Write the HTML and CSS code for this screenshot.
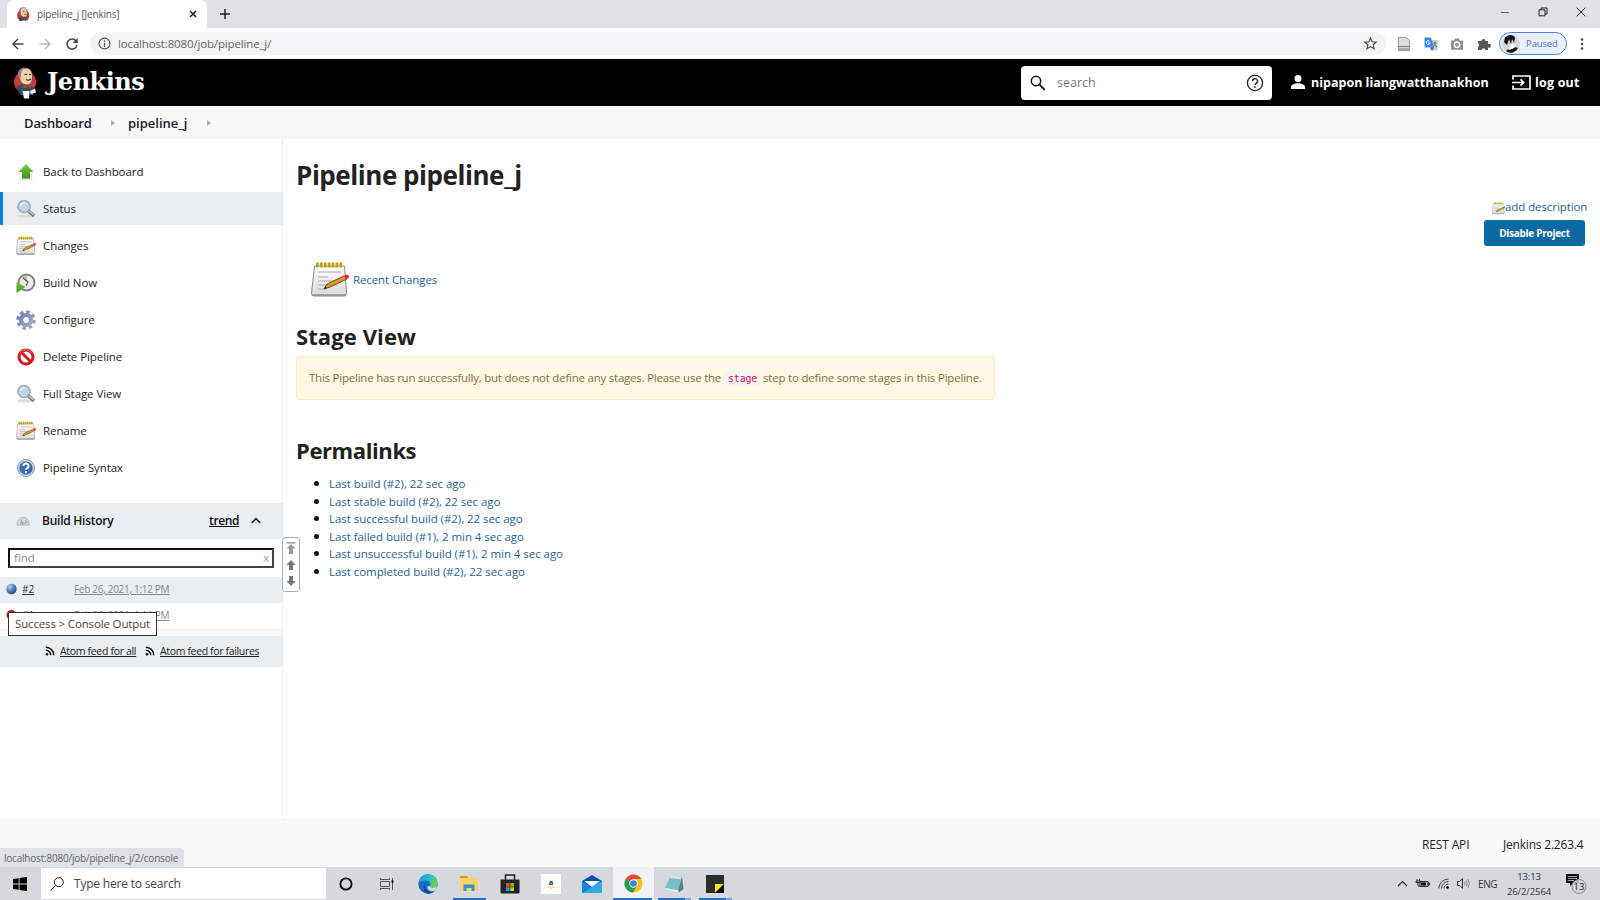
FILE: index.html
```html
<!DOCTYPE html>
<html lang="en">
<head>
<meta charset="utf-8">
<title>pipeline_j [Jenkins]</title>
<link rel="stylesheet" href="styles.css">
</head>
<body>
<svg class="defs" width="0" height="0">
  <defs>
    <linearGradient id="paper" x1="0" y1="0" x2="0" y2="1"><stop offset="0" stop-color="#fff"/><stop offset="1" stop-color="#d9d9d7"/></linearGradient>
    <linearGradient id="green" x1="0" y1="0" x2="0" y2="1"><stop offset="0" stop-color="#7ac943"/><stop offset="1" stop-color="#3a9a14"/></linearGradient>
    <radialGradient id="ballBlue" cx=".35" cy=".3" r=".8"><stop offset="0" stop-color="#b9d3ee"/><stop offset=".5" stop-color="#4a7fc0"/><stop offset="1" stop-color="#1d4277"/></radialGradient>
    <linearGradient id="edge" x1="0" y1="0" x2="1" y2=".3"><stop offset="0" stop-color="#1b8fe0"/><stop offset=".5" stop-color="#25b5d8"/><stop offset="1" stop-color="#62d552"/></linearGradient>
    <linearGradient id="gearFill" x1="0" y1="0" x2="1" y2="1"><stop offset="0" stop-color="#6f83b5"/><stop offset="1" stop-color="#a7a7c9"/></linearGradient>
  </defs>
  <symbol id="butler" viewBox="0 0 24 32">
    <circle cx="12" cy="15" r="11" fill="#d33833"/>
    <path d="M3.500 20c2-2 5-3 8.500-3s8 2 9.500 5l-1 6H7z" fill="#335061"/>
    <path d="M6 8c0-4 3-7 7-7 4.500 0 6.500 4 6.500 9 0 5-2 8-5.500 8-5 0-8-4-8-10z" fill="#ecd0ae" stroke="#4a3b36" stroke-width=".8"/>
    <path d="M5 7c0-4 3-6.500 7-6.500-3 2-4 4-4 7.500l-.5 5-2-2z" fill="#8d8780"/>
    <path d="M11.500 7.500h2.500M16 7.500h2M13 12.500c2 1.500 3 1 5-.5" stroke="#2b2220" stroke-width="1.100" fill="none"/>
    <path d="M10.500 17l4 2 4-2v4l-4-1.200-4 1.200z" fill="#d33833"/>
    <path d="M9.500 24h7l-.5 7.500h-5z" fill="#fff"/>
    <path d="M17 24l5-2.500 1 4-5 1.500z" fill="#eee"/>
  </symbol>
  <symbol id="note" viewBox="0 0 38 38">
    <path d="M3.500 5h30l2 27q0 3-2 3h-31q-2 0-2-3z" fill="url(#paper)" stroke="#8c8c88"/>
    <path d="M2 34h33" stroke="#8e8e8a" stroke-width="1.500"/>
    <path d="M7 11h23M7 16h10M7 20h19M7 24h19M7 28h9" stroke="#a9a9a7" stroke-width="1.100"/>
    <path d="M5 4h27" stroke="#bfa20a" stroke-width="5" stroke-dasharray="2.800 1.100"/>
    <path d="M13 28l3-5 17-8 3 3-17 8z" fill="#d9962e" stroke="#6b4414" stroke-width=".9"/>
    <path d="M33 15l3-1.500q3 1 1 4l-2 1z" fill="#e0202a"/>
    <path d="M13 28l1.500-2.500 1.500 1.500z" fill="#222"/>
  </symbol>
  <symbol id="lens" viewBox="0 0 20 20">
    <ellipse cx="9" cy="17" rx="8" ry="1.600" fill="#ddd"/>
    <path d="M12 11.500l6 5.500" stroke="#777b80" stroke-width="3.400"/>
    <path d="M13 12l4.500 4" stroke="#c9ccd0" stroke-width="1.200"/>
    <circle cx="8" cy="7.500" r="6" fill="#bdd7f2" stroke="#a4a9ae" stroke-width="1.700"/>
    <path d="M4.500 7c.5-2 2-3 4-3" stroke="#eef6fd" stroke-width="1.500" fill="none"/>
  </symbol>
  <symbol id="rss" viewBox="0 0 10 10">
    <circle cx="2" cy="8.200" r="1.300"/><path d="M.8 4.200a5 5 0 0 1 5 5M.8 1.200a8 8 0 0 1 8 8" fill="none" stroke="#000" stroke-width="1.400"/>
  </symbol>
</svg>

<header class="tabstrip">
  <div class="tab">
    <svg class="favicon" width="13" height="14" viewBox="3 0 19 25"><use href="#butler" width="24" height="32"/></svg>
    <span class="t tab-title">pipeline_j [Jenkins]</span>
    <svg class="tab-close" width="8" height="8" viewBox="0 0 8 8"><path d="M1 1l6 6M7 1L1 7" stroke="#222" stroke-width="1.500"/></svg>
  </div>
  <svg class="newtab" width="12" height="12" viewBox="0 0 12 12"><path d="M6 1v10M1 6h10" stroke="#222" stroke-width="1.500"/></svg>
  <div class="winctl">
    <svg width="10" height="10" viewBox="0 0 10 10"><path d="M1 5.500h8" stroke="#555" stroke-width=".9"/></svg>
    <svg width="10" height="10" viewBox="0 0 10 10"><path d="M1 2.800h6v6H1zM3 2.800V1h6v6H7" fill="none" stroke="#222"/></svg>
    <svg width="10" height="10" viewBox="0 0 10 10"><path d="M.7.700l8.600 8.600M9.300.700L.7 9.300" stroke="#222" stroke-width=".9"/></svg>
  </div>
</header>

<div class="toolbar">
  <div class="navbtns">
    <svg width="12" height="12" viewBox="0 0 12 12"><path d="M11.500 6H1M6 1L1 6l5 5" fill="none" stroke="#444" stroke-width="1.400"/></svg>
    <svg width="12" height="12" viewBox="0 0 12 12"><path d="M.5 6H11M6 1l5 5-5 5" fill="none" stroke="#b5b7ba" stroke-width="1.400"/></svg>
    <svg width="12" height="12" viewBox="0 0 12 12"><path d="M10.200 3.200A5 5 0 1 0 11 7.200" fill="none" stroke="#444" stroke-width="1.500"/><path d="M11.700 0v5H6.700z" fill="#444"/></svg>
  </div>
  <div class="omnibox">
    <svg width="13" height="13" viewBox="0 0 13 13"><circle cx="6.500" cy="6.500" r="5.400" fill="none" stroke="#555" stroke-width="1.200"/><path d="M6.500 5.700v4M6.500 3.200v1.500" stroke="#555" stroke-width="1.300"/></svg>
    <span class="t url">localhost:8080/job/pipeline_j/</span>
    <svg class="star" width="13" height="13" viewBox="0 0 13 13"><path d="M6.500 1l1.600 3.800 4.100.3-3.100 2.700 1 4-3.600-2.200-3.600 2.200 1-4L.8 5.100l4.100-.3z" fill="none" stroke="#444" stroke-width="1.100"/></svg>
  </div>
  <div class="exts">
    <svg width="14" height="14" viewBox="0 0 14 14"><path d="M1.500.500h8l3 3v10h-11z" fill="#ddd" stroke="#999"/><path d="M2 9.500h10M2 12h10" stroke="#777"/></svg>
    <svg width="14" height="14" viewBox="0 0 14 14"><path d="M5 3h8.500v10.500H7z" fill="#c6cbd2"/><path d="M.5.500h6.500l3 10H.5z" fill="#4285f4"/><path d="M6 10.500h4l-2 3.500z" fill="#2b5fc4"/><path d="M5.500 4.300A1.900 1.900 0 1 0 6 6H4" stroke="#fff" fill="none"/><path d="M9 6h4M11 5v1c0 2-1 3-2 4M10 7l3 3" stroke="#666" fill="none" stroke-width=".9"/></svg>
    <svg width="14" height="14" viewBox="0 0 14 14"><path d="M1 3.500h3.300L5 1.500h4l.7 2H13v9.300H1z" fill="#8e8e8e"/><circle cx="7" cy="7.800" r="2.800" fill="#999" stroke="#fff" stroke-width="1.300"/></svg>
    <svg width="14" height="14" viewBox="0 0 14 14"><path d="M1 4h3.500a2 2 0 1 1 4 0H11v3a2 2 0 1 1 0 3.500V13H8.200a1.700 1.700 0 0 0-3.400 0H1v-3.200a1.700 1.700 0 0 0 0-3.300z" fill="#55585c"/></svg>
  </div>
  <div class="pill">
    <svg width="18" height="18" viewBox="0 0 18 18"><circle cx="9" cy="9" r="9" fill="#d8d5d0"/><path d="M3 2.500C6-1 12-1 13 3l-1 5-2-4-1 5-2-5-2 6-3-3z" fill="#111"/><path d="M4 16c3-3 6-1 9-4l3 1c-3 5-8 6-12 3z" fill="#191919"/><path d="M9 9l5 1-2 3-5 2z" fill="#fff"/></svg>
    <span class="t paused">Paused</span>
  </div>
  <svg class="kebab" width="4" height="14" viewBox="0 0 4 14" fill="#444"><circle cx="2" cy="2.500" r="1.300"/><circle cx="2" cy="7" r="1.300"/><circle cx="2" cy="11.500" r="1.300"/></svg>
</div>

<div class="jheader">
  <svg class="logo" width="24" height="32"><use href="#butler" width="24" height="32"/></svg>
  <span class="t brand">Jenkins</span>
  <div class="searchbox">
    <svg width="16" height="16" viewBox="0 0 16 16"><circle cx="6" cy="6" r="4.700" fill="none" stroke="#111" stroke-width="1.500"/><path d="M9.300 9.300l5.500 5.500" stroke="#111" stroke-width="1.900"/></svg>
    <span class="t placeholder">search</span>
    <svg class="help" width="18" height="18" viewBox="0 0 18 18"><circle cx="9" cy="9" r="7.600" fill="none" stroke="#1c2733" stroke-width="1.400"/><path d="M6.500 7.200a2.500 2.500 0 1 1 3.600 2.200c-.8.400-1.100.8-1.100 1.600M9 12.300v1.600" fill="none" stroke="#1c2733" stroke-width="1.400"/></svg>
  </div>
  <div class="user"><svg width="14" height="14" viewBox="0 0 14 14" fill="#fff"><circle cx="7" cy="3.500" r="3.500"/><path d="M0 14v-2c0-2.500 4-3.700 7-3.700s7 1.200 7 3.700v2z"/></svg><span class="t username">nipapon liangwatthanakhon</span></div>
  <div class="logout"><svg width="19" height="15" viewBox="0 0 19 15"><path d="M1 4.500V1h17v13H1v-3.500M0 7.500h11.500M8.500 4.300l3.200 3.200-3.200 3.200" fill="none" stroke="#fff" stroke-width="1.700"/></svg><span class="t logout-text">log out</span></div>
</div>

<nav class="crumbs">
  <a class="t crumb crumb-a">Dashboard</a>
  <svg width="4" height="6" viewBox="0 0 4 6"><path d="M0 0l4 3-4 3z" fill="#aaa"/></svg>
  <a class="t crumb crumb-b">pipeline_j</a>
  <svg width="4" height="6" viewBox="0 0 4 6"><path d="M0 0l4 3-4 3z" fill="#aaa"/></svg>
</nav>

<main class="page">
  <aside class="side">
    <ul class="tasks">
      <li><svg width="20" height="20" viewBox="0 0 20 20"><ellipse cx="10" cy="17" rx="7" ry="1.200" fill="#ddd"/><path d="M10 2l7.500 8H14v6.500H6V10H2.500z" fill="url(#green)"/></svg><span class="t task">Back to Dashboard</span></li>
      <li class="active"><svg width="20" height="20"><use href="#lens" width="20" height="20"/></svg><span class="t task">Status</span></li>
      <li><svg width="20" height="20"><use href="#note" width="20" height="20"/></svg><span class="t task">Changes</span></li>
      <li><svg width="20" height="20" viewBox="0 0 20 20"><circle cx="10.500" cy="9.500" r="8" fill="#eeeef2" stroke="#7b7d95" stroke-width="2"/><path d="M10.500 9.500L6 4.500l5-2z" fill="#d8bd59"/><path d="M7 5l5 4-2 4" fill="none" stroke="#555" stroke-width="1.200"/><path d="M.5 9l9 5-9 6z" fill="url(#green)"/></svg><span class="t task">Build Now</span></li>
      <li><svg width="20" height="20" viewBox="0 0 20 20"><circle cx="10" cy="10" r="8" fill="none" stroke="url(#gearFill)" stroke-width="3.600" stroke-dasharray="3.400 2.883"/><circle cx="10" cy="10" r="5" fill="none" stroke="url(#gearFill)" stroke-width="4.200"/></svg><span class="t task">Configure</span></li>
      <li><svg width="20" height="20" viewBox="0 0 20 20"><circle cx="10" cy="10" r="7" fill="#fff" stroke="#d3171c" stroke-width="3"/><path d="M5 5l10 10" stroke="#d3171c" stroke-width="3"/><path d="M3.500 6.500a7.500 7.500 0 0 1 13 0" fill="none" stroke="#ee7678"/></svg><span class="t task">Delete Pipeline</span></li>
      <li><svg width="20" height="20"><use href="#lens" width="20" height="20"/></svg><span class="t task">Full Stage View</span></li>
      <li><svg width="20" height="20"><use href="#note" width="20" height="20"/></svg><span class="t task">Rename</span></li>
      <li><svg width="20" height="20" viewBox="0 0 20 20"><circle cx="10" cy="10" r="8.300" fill="#3f6fae" stroke="#56779f" stroke-width="1"/><circle cx="10" cy="10" r="7.400" fill="none" stroke="#dbe6f3" stroke-width="1.200"/><path d="M7.500 8a2.500 2.500 0 1 1 3.600 2.200c-.8.400-1.100.8-1.100 1.600M10 13v2" fill="none" stroke="#fff" stroke-width="1.900"/></svg><span class="t task">Pipeline Syntax</span></li>
    </ul>
    <section class="history">
      <div class="hist-head">
        <svg width="14" height="10" viewBox="0 0 14 10"><path d="M1 9C1 5 3 1.500 7 1.500S13 5 13 9z" fill="#ddd" stroke="#b5b5b5"/><path d="M7 9L5 3.500M4 7h6M9 4l2 3" stroke="#999" fill="none"/></svg>
        <span class="t hist-title">Build History</span>
        <a class="t trend">trend</a>
        <svg class="chev" width="10" height="7" viewBox="0 0 10 7"><path d="M.7 6L5 1.700 9.300 6" fill="none" stroke="#222" stroke-width="1.600"/></svg>
      </div>
      <div class="find-row"><div class="find"><span class="t find-text">find</span><span class="find-x">x</span></div></div>
      <div class="build build-on">
        <svg width="11" height="12" viewBox="0 0 11 12"><circle cx="5.500" cy="6" r="5.200" fill="url(#ballBlue)"/></svg>
        <a class="t num">#2</a><a class="t date">Feb 26, 2021, 1:12 PM</a>
      </div>
      <div class="build">
        <svg width="11" height="12" viewBox="0 0 11 12"><circle cx="5.500" cy="6" r="5" fill="#c4161c"/></svg>
        <a class="t num">#1</a><a class="t date">Feb 26, 2021, 1:11 PM</a>
        <div class="tooltip"><span class="t tip">Success &gt; Console Output</span></div>
      </div>
      <div class="gap-strip"></div>
      <div class="feeds">
        <svg width="10" height="10"><use href="#rss" width="10" height="10"/></svg><a class="t feed feed-a">Atom feed for all</a>
        <svg width="10" height="10"><use href="#rss" width="10" height="10"/></svg><a class="t feed feed-b">Atom feed for failures</a>
      </div>
    </section>
    <div class="scroller">
      <svg width="12" height="12" viewBox="0 0 12 12" fill="#999"><path d="M1.500 0h9v1.400h-9zM6 2l4.500 4.500H8V12H4V6.500H1.500z"/></svg>
      <svg width="12" height="12" viewBox="0 0 12 12" fill="#777"><path d="M6 1l4.500 5H8v5H4V6H1.500z"/></svg>
      <svg width="12" height="12" viewBox="0 0 12 12" fill="#777"><path d="M6 11l4.500-5H8V1H4v5H1.500z"/></svg>
    </div>
  </aside>

  <div class="main">
    <h1>Pipeline pipeline_j</h1>
    <div class="actions">
      <div class="adddesc"><svg width="13" height="13"><use href="#note" width="13" height="13"/></svg><a class="t desc">add description</a></div>
      <button class="disable">Disable Project</button>
    </div>
    <div class="recent"><svg width="38" height="38"><use href="#note" width="38" height="38"/></svg><a class="t rc">Recent Changes</a></div>
    <h2>Stage View</h2>
    <div class="warning"><span class="t w1">This Pipeline has run successfully, but does not define any stages. Please use the</span><code>stage</code><span class="t w3">step to define some stages in this Pipeline.</span></div>
    <h2 class="perma">Permalinks</h2>
    <ul class="links">
      <li><a>Last build (#2), 22 sec ago</a></li>
      <li><a>Last stable build (#2), 22 sec ago</a></li>
      <li><a>Last successful build (#2), 22 sec ago</a></li>
      <li><a>Last failed build (#1), 2 min 4 sec ago</a></li>
      <li><a>Last unsuccessful build (#1), 2 min 4 sec ago</a></li>
      <li><a>Last completed build (#2), 22 sec ago</a></li>
    </ul>
  </div>
</main>

<footer class="foot">
  <div class="status">localhost:8080/job/pipeline_j/2/console</div>
  <span class="t rest">REST API</span><span class="t ver">Jenkins 2.263.4</span>
</footer>

<div class="taskbar">
  <div class="start"><svg width="14" height="14" viewBox="0 0 14 14"><path d="M0 2l5.700-.8v5.400H0zM6.500 1L14 0v6.600H6.500zM0 7.400h5.700v5.400L0 12zM6.500 7.400H14V14l-7.500-1z"/></svg></div>
  <div class="tsearch"><svg width="14" height="14" viewBox="0 0 14 14"><circle cx="8.800" cy="5.200" r="4.500" fill="none" stroke="#222"/><path d="M5.500 8.500L.7 13.500" stroke="#222"/></svg><span class="t type">Type here to search</span></div>
  <div class="apps">
    <div class="app"><svg width="14" height="14" viewBox="0 0 14 14"><circle cx="7" cy="7" r="5.600" fill="none" stroke="#111" stroke-width="1.900"/></svg></div>
    <div class="app"><svg width="14" height="14" viewBox="0 0 14 14"><path d="M.5 1v1.500h9V1M.5 13v-1.500h9V13M.5 4.500h9v5h-9zM12.500 1v12" fill="none" stroke="#444" stroke-width=".9"/><path d="M11.500 3.500h2v2h-2z"/></svg></div>
    <div class="app"><svg width="20" height="20" viewBox="0 0 20 20"><circle cx="10" cy="10" r="9.700" fill="#1470c2"/><path d="M.4 9.500C1 4 5 .3 10 .3c6 0 9.700 4 9.700 8.500 0 3-2.200 4.900-5 4.900-2 0-3.200-.7-2.700-1.700 1.500-2.500-.5-5.500-4-5.500S1.500 7.500.4 9.500z" fill="url(#edge)"/><path d="M7.500 9.300c-2 4 1 8.500 6 8.500 1.500 0 3-.5 4.200-1.300-1.700 2-4.700 3.200-7.700 3.200-4.200-1.500-6-7.500-2.500-10.400z" fill="#0d4b94"/><path d="M12 12c-.5 1 .7 1.700 2.700 1.700 1.700 0 3.300-.7 4.200-1.900l-.7 4c-1.200 1-2.700 1.500-4.200 1.500-3 0-5-2.300-4.500-5z" fill="#d5d9dd"/></svg></div>
    <div class="app run"><svg width="18" height="16" viewBox="0 0 18 16"><path d="M0 0h7l1.500 2H18v13H0z" fill="#fbd367"/><path d="M0 0h7l1.500 2H0z" fill="#dd9c16"/><path d="M3.500 15V8.500h11V15h-3v-3h-5v3z" fill="#3a8fd8"/></svg></div>
    <div class="app"><svg width="20" height="20" viewBox="0 0 20 20"><path d="M5.500 6V1h9v5" fill="none" stroke="#222" stroke-width="1.500"/><path d="M.5 5.500h19V19l-1 .5h-17l-1-.5z" fill="#222"/><path d="M6 9h3.700v3.700H6z" fill="#f25022"/><path d="M10.300 9H14v3.700h-3.700z" fill="#7fba00"/><path d="M6 13.300h3.700V17H6z" fill="#00a4ef"/><path d="M10.300 13.300H14V17h-3.700z" fill="#ffb900"/></svg></div>
    <div class="app"><div class="amazon">a<svg width="6" height="2" viewBox="0 0 6 2"><path d="M0 .3q3 1.800 6 0" stroke="#f90" stroke-width=".7" fill="none"/></svg></div></div>
    <div class="app"><svg width="20" height="20" viewBox="0 0 20 20"><path d="M0 7l10-6 10 6v12H0z" fill="#0a4fa3"/><path d="M2 7h16l-8 6z" fill="#fff"/><path d="M0 7l10 6.500L0 19z" fill="#1684d8"/><path d="M20 7L0 19h20z" fill="#35a8ec"/></svg></div>
    <div class="app run chrome"><svg width="19" height="19" viewBox="0 0 20 20"><circle cx="10" cy="10" r="9.500" fill="#fbc116"/><path d="M10 10L1.800 5.200A9.500 9.500 0 0 1 18.200 5.300H10z" fill="#dd4b3e"/><path d="M1.800 5.200A9.500 9.500 0 0 0 9.500 19.500L14 12 10 10z" fill="#22a05a"/><circle cx="10" cy="10" r="4.400" fill="#fff"/><circle cx="10" cy="10" r="3.500" fill="#3f7fe8"/></svg></div>
    <div class="app run two"><svg width="20" height="20" viewBox="0 0 20 20"><path d="M7 1l11 1.500-4 14L1 14z" fill="#7fbccb"/><path d="M7 1l11 1.500-1 3L5.500 4z" fill="#d6e6e9"/><path d="M18 2.500L19.500 15 15 18.500l-1-2z" fill="#5a7f89"/><path d="M1 14l13 2.500.7 2L1 15z" fill="#e8f2f4"/></svg></div>
    <div class="app run two"><svg width="18" height="18" viewBox="0 0 18 18"><path d="M0 0h18v10l-8 8H0z" fill="#2b2b2b"/><path d="M9 9h9l-9 9z" fill="#fde22b"/><path d="M18 9v9H9z" fill="#111"/></svg></div>
  </div>
  <div class="tray">
    <svg width="11" height="7" viewBox="0 0 11 7"><path d="M1 6l4.500-4.500L10 6" fill="none" stroke="#333" stroke-width="1.200"/></svg>
    <svg width="14" height="9" viewBox="0 0 14 9"><path d="M4 2.500h8v5H4z" fill="none" stroke="#222"/><path d="M5 3.500h5v3H5z"/><path d="M12 4h1.500v2H12zM1 0v2M3.500 0v2M0 2h4.500v1.500H0zM2 3v4h2" stroke="#222" stroke-width=".9" fill="none"/></svg>
    <svg width="11" height="11" viewBox="0 0 11 11"><path d="M.7 10.500A10 10 0 0 1 10.500 1M3.500 10.500a7 7 0 0 1 7-7M6 10.500A4.500 4.500 0 0 1 10.500 6" fill="none" stroke="#444"/><circle cx="9.500" cy="9.500" r="1.300"/></svg>
    <svg width="13" height="11" viewBox="0 0 13 11"><path d="M.5 3.500h2L5.500.700v9.600L2.500 7.500h-2z" fill="none" stroke="#333"/><path d="M7.500 3.700q1 1.800 0 3.600M9.300 2.500q1.800 3 0 6M11 1q2.600 4.500 0 9" fill="none" stroke="#777" stroke-width=".8"/></svg>
    <span class="t eng">ENG</span>
    <div class="clock"><span class="t">13:13</span><span class="t">26/2/2564</span></div>
    <svg class="notif" width="22" height="22" viewBox="0 0 22 22"><path d="M0 1h13v9H7l-3 3v-3H0z" fill="#111"/><path d="M2 3.500h9M2 5.500h9M2 7.500h6" stroke="#ccc" stroke-width=".8"/><circle cx="13" cy="13.500" r="7" fill="#d2d6da" fill-opacity=".85" stroke="#888"/><text x="13" y="17" text-anchor="middle" class="badge">13</text></svg>
  </div>
</div>
</body>
</html>
```
FILE: styles.css
```css
* { box-sizing: border-box; }
body {
  margin: 0; width: 1600px; height: 900px; overflow: hidden;
  display: flex; flex-direction: column; background: #fff;
  font-family: "Open Sans", "Noto Sans", sans-serif; font-size: 12px; line-height: 16px; color: #222;
}
svg { display: block; flex: none; overflow: visible; }
.defs { position: absolute; }
.t { white-space: nowrap; flex: none; }
ul { list-style: none; margin: 0; padding: 0; }

/* browser chrome */
.tabstrip { height: 28px; flex: none; background: #dee1e6; display: flex; align-items: center; }
.tab { margin-left: 7px; width: 200px; height: 28px; background: #fff; border-radius: 7px 7px 0 0; display: flex; align-items: center; padding-left: 10px; }
.favicon { margin-right: 7px; overflow: hidden; }
.tab-title { font-size: 10px; color: #555; width: 152px; letter-spacing: -.2px; }
.newtab { margin-left: 12px; }
.winctl { margin-left: auto; display: flex; gap: 28px; padding-right: 14px; margin-top: -4px; }
.toolbar { height: 31px; flex: none; display: flex; align-items: center; }
.navbtns { display: flex; gap: 15px; width: 90px; padding-left: 12px; }
.omnibox { width: 1296px; height: 23px; border-radius: 12px; background: #f1f3f4; display: flex; align-items: center; padding: 0 9px 0 8px; }
.url { margin-left: 7px; font-size: 11.5px; color: #666; letter-spacing: -.15px; }
.star { margin-left: auto; }
.exts { display: flex; gap: 12.700px; margin-left: 11px; }
.pill { margin-left: 8px; width: 68px; height: 23px; border: 1.500px solid #4a80dc; border-radius: 12px; background: #eaf1fd; display: flex; align-items: center; padding-left: 2px; }
.paused { margin-left: 6px; font-size: 9.500px; color: #4a6fc9; letter-spacing: -.15px; }
.kebab { margin-left: 13px; }

/* application header */
.jheader { height: 47px; flex: none; background: #000; display: flex; align-items: center; color: #fff; }
.logo { margin-left: 13px; }
.brand { margin-left: 10px; width: 964px; font: bold 24px/30px "DejaVu Serif", serif; letter-spacing: -.5px; margin-top: -2px; }
.searchbox { margin-left: 10px; width: 251px; height: 34px; border-radius: 4px; background: #fff; display: flex; align-items: center; padding: 0 8px 0 9px; }
.placeholder { margin-left: 11px; font-size: 12.5px; color: #777; }
.help { margin-left: auto; }
.user { margin-left: 19px; display: flex; align-items: center; width: 220px; }
.username { margin-left: 6px; font-weight: 700; font-size: 12.5px; }
.logout { display: flex; align-items: center; margin-left: 1px; }
.logout-text { margin-left: 4px; font-weight: 700; font-size: 12.5px; letter-spacing: .2px; }
.user svg, .logout svg { margin-top: -1px; }
.crumbs { height: 33px; flex: none; background: #f8f8f8; display: flex; align-items: center; padding-left: 24px; }
.crumb { font-weight: 600; font-size: 13px; color: #1c1c2c; }
.crumb-a { width: 87px; letter-spacing: -.15px; }
.crumb-b { width: 79px; margin-left: 13px; }

/* side panel */
.page { flex: 1; display: flex; min-height: 0; }
.side { width: 283px; flex: none; border-right: 1px solid #eee; padding-top: 16px; position: relative; }
.tasks { display: flex; flex-direction: column; gap: 4.100px; }
.tasks li { height: 33px; display: flex; align-items: center; padding-left: 16px; }
.tasks .active { background: #e9eef2; border-left: 3px solid #0684d8; padding-left: 13px; }
.task { margin-left: 7px; font-size: 11.5px; letter-spacing: -.08px; color: #222; }
.history { margin-top: 18px; }
.hist-head { height: 36px; background: #e9eef2; display: flex; align-items: center; padding-left: 16px; }
.hist-title { margin-left: 12px; font-weight: 600; font-size: 12px; letter-spacing: -.25px; width: 167px; color: #111; }
.trend { font-weight: 600; letter-spacing: -.35px; text-decoration: underline; color: #111; width: 42px; }
.find-row { height: 38px; padding: 9px 8px 0; }
.find { height: 20px; border: 2px solid #111; border-right-color: #444; border-bottom-color: #444; display: flex; align-items: center; justify-content: space-between; padding: 0 3px 0 4px; color: #888; }
.find-text { font-size: 11.5px; }
.find-x { font-size: 11px; color: #999; }
.build { height: 26px; display: flex; align-items: center; padding: 0 0 2px 6px; position: relative; }
.build-on { background: #e9eef2; }
.num { margin-left: 5px; width: 52px; font-size: 10px; text-decoration: underline; color: #333; }
.date { font-size: 10px; letter-spacing: -.3px; text-decoration: underline; color: #888; }
.tooltip { position: absolute; left: 8px; top: 9px; width: 149px; height: 24px; border: 1px solid #333; background: #fff; display: flex; align-items: center; padding-left: 6px; z-index: 2; }
.tip { font-size: 11.5px; letter-spacing: -.15px; color: #444; }
.gap-strip { height: 7px; background: #f7f7f7; border-top: 1px solid #eee; }
.feeds { height: 31px; background: #e9eef2; display: flex; align-items: center; padding-left: 45px; }
.feed { margin-left: 5px; font-size: 10.5px; letter-spacing: -.32px; text-decoration: underline; color: #222; }
.feed-a { width: 85px; }
.feed-b { letter-spacing: -.35px; }
.scroller { position: absolute; left: 282px; top: 398px; width: 18px; height: 55px; border: 1px solid #a4adb5; border-radius: 3px; background: #fff; display: flex; flex-direction: column; align-items: center; justify-content: space-evenly; }

/* main panel */
.main { flex: 1; padding: 20px 12px 0 13px; display: flex; flex-direction: column; }
h1 { margin: 0; font-size: 26px; line-height: 32px; font-weight: 700; letter-spacing: -.45px; }
.actions { display: flex; flex-direction: column; align-items: flex-end; height: 70px; padding-top: 8px; }
.adddesc { display: flex; align-items: center; color: #1f5f96; height: 16px; }
.adddesc svg { margin-top: 3px; }
.desc { font-size: 11.5px; letter-spacing: -.08px; width: 83px; }
.disable { margin: 5px 3px 0 0; width: 101px; height: 26px; border: 0; border-radius: 3px; background: #0b6aa2; color: #fff; font: 700 10px/16px "Open Sans", sans-serif; letter-spacing: -.28px; padding: 0; }
.recent { display: flex; align-items: center; padding-left: 15px; height: 38px; color: #1f5f96; }
.rc { margin-left: 4px; font-size: 11.5px; letter-spacing: -.1px; }
h2 { margin: 22px 0 0; font-size: 22px; line-height: 30px; font-weight: 700; letter-spacing: .1px; }
.warning { margin-top: 5px; width: 699px; height: 44px; border: 1px solid #faebc4; border-radius: 3px; background: #fcf8e3; color: #86713f; display: flex; align-items: center; padding-left: 12px; font-size: 11.5px; }
.w1 { width: 415px; letter-spacing: -.23px; }
.w3 { letter-spacing: -.2px; }
code { width: 36px; height: 15px; background: #f7f2f5; border-radius: 3px; color: #c7254e; font: 10px/15px "DejaVu Sans Mono", monospace; letter-spacing: -.2px; padding-left: 4px; margin-right: 3px; }
h2.perma { margin-top: 35px; letter-spacing: -.4px; }
.links { margin: 10px 0 0 33px; font-size: 11.5px; letter-spacing: -.05px; color: #1f5f96; }
.links li { height: 17.500px; line-height: 17.500px; position: relative; }
.links li::before { content: ""; position: absolute; left: -15px; top: 6px; width: 5px; height: 5px; border-radius: 50%; background: #111; }

/* footer and desktop bar */
.foot { height: 48px; flex: none; background: #f8f8f8; border-top: 1px solid #eee; position: relative; display: flex; align-items: center; padding: 2px 0 0 1422px; }
.rest { width: 81px; letter-spacing: -.15px; }
.ver { letter-spacing: -.2px; }
.status { position: absolute; left: 0; bottom: 0; width: 184px; height: 19px; background: #dee1e6; border-radius: 0 4px 0 0; padding: 2px 0 0 4px; font-size: 10px; letter-spacing: -.21px; color: #666; white-space: nowrap; }
.taskbar { height: 33px; flex: none; background: #d5d9dd; display: flex; align-items: stretch; }
.start { width: 41px; display: flex; align-items: center; padding-left: 13px; }
.tsearch { width: 285px; margin: 1px 0; background: #fff; display: flex; align-items: center; padding-left: 9px; }
.type { margin-left: 10px; font-size: 12px; letter-spacing: -.2px; color: #444; }
.apps { display: flex; }
.app { width: 41px; display: flex; align-items: center; justify-content: center; position: relative; padding-right: 1px; }
.app.run::after { content: ""; position: absolute; left: 4px; right: 4px; bottom: 0; height: 2px; background: #1f6fd0; }
.app.two::after { background: linear-gradient(90deg, #1f6fd0 82%, #76aadf 82%); }
.app.chrome { background: #f0f2f5; }
.app.chrome::after { left: 0; right: 2px; }
.amazon { width: 20px; height: 20px; background: #fff; font: bold 7.500px/9px "Open Sans", sans-serif; display: flex; flex-direction: column; align-items: center; padding-top: 4px; }
.tray { margin-left: auto; display: flex; align-items: center; gap: 8px; padding-right: 12px; }
.eng { font-size: 10px; letter-spacing: -.4px; color: #333; width: 20px; }
.clock { display: flex; flex-direction: column; align-items: center; width: 46px; font-size: 9.500px; line-height: 15px; letter-spacing: -.1px; color: #333; }
.notif { margin-left: 6px; }
.badge { font: 9.500px "Open Sans", sans-serif; fill: #222; }
```
